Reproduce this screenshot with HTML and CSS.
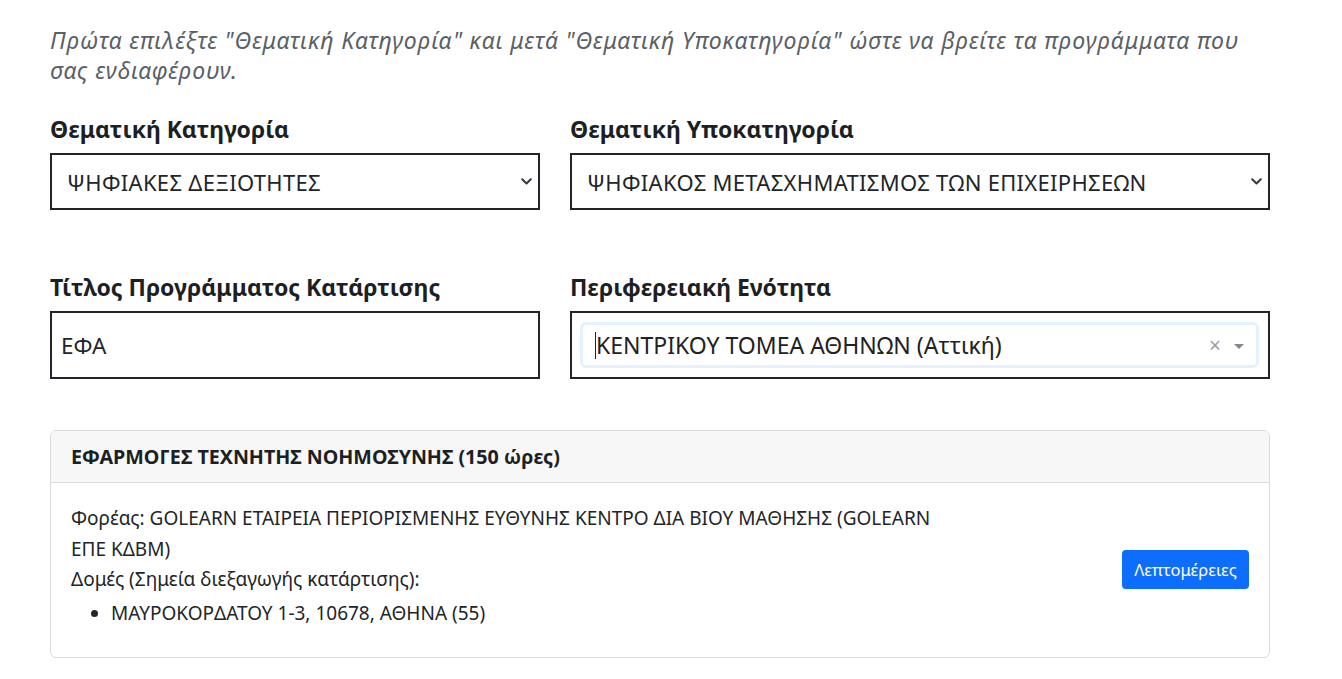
FILE: index.html
```html
<!DOCTYPE html>
<html lang="el">
<head>
<meta charset="utf-8">
<title>Αναζήτηση προγραμμάτων</title>
<link rel="stylesheet" href="styles.css">
</head>
<body>
<main class="page">
  <p class="intro">Πρώτα επιλέξτε "Θεματική Κατηγορία" και μετά "Θεματική Υποκατηγορία" ώστε να βρείτε τα προγράμματα που σας ενδιαφέρουν.</p>

  <div class="row row-first">
    <div class="field col-5">
      <label class="label">Θεματική Κατηγορία</label>
      <div class="select">
        <span class="select-text">ΨΗΦΙΑΚΕΣ ΔΕΞΙΟΤΗΤΕΣ</span>
        <svg class="chev" width="11" height="7" viewBox="0 0 11 7"><path d="M1.2 1.2 L5.5 5.5 L9.8 1.2" fill="none" stroke="#343a40" stroke-width="2" stroke-linecap="round" stroke-linejoin="round"/></svg>
      </div>
    </div>
    <div class="field col-7">
      <label class="label">Θεματική Υποκατηγορία</label>
      <div class="select">
        <span class="select-text">ΨΗΦΙΑΚΟΣ ΜΕΤΑΣΧΗΜΑΤΙΣΜΟΣ ΤΩΝ ΕΠΙΧΕΙΡΗΣΕΩΝ</span>
        <svg class="chev" width="11" height="7" viewBox="0 0 11 7"><path d="M1.2 1.2 L5.5 5.5 L9.8 1.2" fill="none" stroke="#343a40" stroke-width="2" stroke-linecap="round" stroke-linejoin="round"/></svg>
      </div>
    </div>
  </div>

  <div class="row row-second">
    <div class="field col-5">
      <label class="label">Τίτλος Προγράμματος Κατάρτισης</label>
      <div class="input"><span class="input-text">ΕΦΑ</span></div>
    </div>
    <div class="field col-7">
      <label class="label">Περιφερειακή Ενότητα</label>
      <div class="input input-s2">
        <div class="s2">
          <span class="s2-caret"></span>
          <span class="s2-text">ΚΕΝΤΡΙΚΟΥ ΤΟΜΕΑ ΑΘΗΝΩΝ (Αττική)</span>
          <span class="s2-clear">×</span>
          <span class="s2-arrow"></span>
        </div>
      </div>
    </div>
  </div>

  <section class="card">
    <header class="card-header">ΕΦΑΡΜΟΓΕΣ ΤΕΧΝΗΤΗΣ ΝΟΗΜΟΣΥΝΗΣ (150 ώρες)</header>
    <div class="card-body">
      <div class="card-info">
        <div class="line">Φορέας: GOLEARN ΕΤΑΙΡΕΙΑ ΠΕΡΙΟΡΙΣΜΕΝΗΣ ΕΥΘΥΝΗΣ ΚΕΝΤΡΟ ΔΙΑ ΒΙΟΥ ΜΑΘΗΣΗΣ (GOLEARN ΕΠΕ ΚΔΒΜ)</div>
        <div class="line">Δομές (Σημεία διεξαγωγής κατάρτισης):</div>
        <ul class="list">
          <li>ΜΑΥΡΟΚΟΡΔΑΤΟΥ 1-3, 10678, ΑΘΗΝΑ (55)</li>
        </ul>
      </div>
      <div class="card-action">
        <button class="btn" type="button">Λεπτομέρειες</button>
      </div>
    </div>
  </section>
</main>
</body>
</html>
```

FILE: styles.css
```css
html, body {
  margin: 0;
  padding: 0;
  background: #ffffff;
}

body {
  font-family: "Noto Sans", "Open Sans", sans-serif;
  color: #212529;
}

.page {
  width: 1220px;
  padding: 25px 0 0 50px;
}

.intro {
  margin: 0;
  font-size: 23px;
  line-height: 30px;
  font-style: italic;
  letter-spacing: 0.85px;
  color: #5a6066;
}

.row {
  display: flex;
  gap: 30px;
}

.row-first {
  margin-top: 28px;
}

.row-second {
  margin-top: 61px;
}

.col-5 {
  width: 490px;
}

.col-7 {
  width: 700px;
}

.field {
  display: flex;
  flex-direction: column;
}

.label {
  font-size: 23px;
  font-weight: 700;
  line-height: 32px;
  margin-bottom: 8px;
  color: #1c1f23;
}

.select {
  height: 57px;
  box-sizing: border-box;
  border: 2px solid #212529;
  display: flex;
  align-items: center;
  padding: 0 6px 0 15px;
}

.select-text {
  flex: 1;
  font-size: 22px;
  letter-spacing: 0.3px;
  color: #212529;
}

.chev {
  display: block;
}

.input {
  height: 68px;
  box-sizing: border-box;
  border: 2px solid #212529;
  display: flex;
  align-items: center;
  padding: 0 9px;
}

.input-text {
  font-size: 22.5px;
}

.input-s2 {
  padding: 0 9px 0 8px;
}

.s2 {
  flex: 1;
  height: 46px;
  box-sizing: border-box;
  border: 3px solid #e6f1fe;
  border-radius: 6px;
  display: flex;
  align-items: center;
  padding: 0 12px 0 12px;
}

.s2-caret {
  width: 1px;
  height: 27px;
  background: #222;
}

.s2-text {
  flex: 1;
  font-size: 23px;
  color: #222;
}

.s2-clear {
  font-size: 21px;
  color: #9aa0a6;
  margin-right: 13px;
  line-height: 1;
}

.s2-arrow {
  width: 0;
  height: 0;
  border-left: 5px solid transparent;
  border-right: 5px solid transparent;
  border-top: 5px solid #888;
  margin-top: 2px;
}

.card {
  margin-top: 51px;
  border: 1px solid #dcdcdc;
  border-radius: 6px;
  overflow: hidden;
}

.card-header {
  height: 52px;
  box-sizing: border-box;
  background: #f7f7f7;
  border-bottom: 1px solid #dcdcdc;
  padding: 0 20px;
  display: flex;
  align-items: center;
  font-size: 19.7px;
  font-weight: 700;
  color: #1c1f23;
}

.card-body {
  display: flex;
  align-items: center;
  padding: 20px 20px 29px 20px;
}

.card-info {
  width: 890px;
  font-size: 19px;
  line-height: 30.5px;
}

.line {
  margin: 0;
}

.list {
  margin: 3px 0 0 0;
  padding-left: 40px;
}

.list li {
  line-height: 30.5px;
}

.card-action {
  flex: 1;
  display: flex;
  justify-content: flex-end;
  margin-top: 8px;
}

.btn {
  font-family: "Noto Sans", "Open Sans", sans-serif;
  font-size: 16.5px;
  color: #ffffff;
  background: #0d6efd;
  border: none;
  border-radius: 4px;
  width: 127px;
  height: 39px;
  padding: 0;
}
```
